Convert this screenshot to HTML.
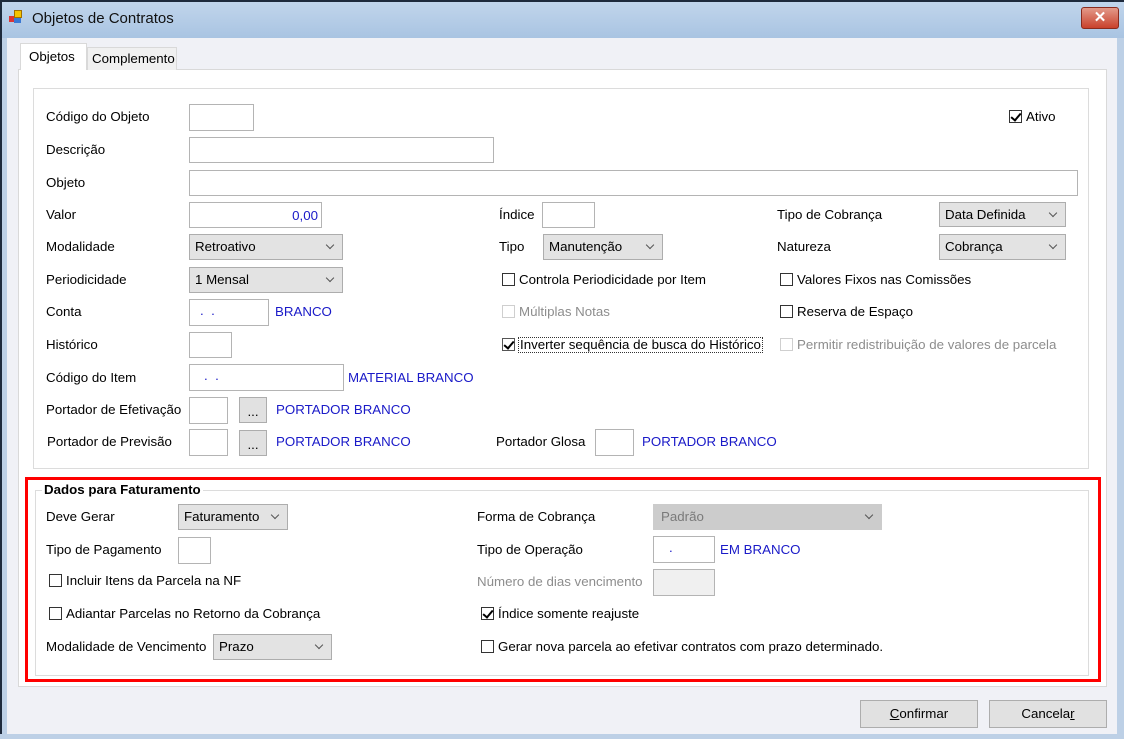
<!DOCTYPE html>
<html><head><meta charset="utf-8"><style>
*{margin:0;padding:0;box-sizing:border-box}
body{width:1124px;height:739px;overflow:hidden;background:#f0f1f6;font-family:"Liberation Sans",sans-serif;font-size:13.3px;color:#000;position:relative}
.a{position:absolute;white-space:nowrap}
.lbl{position:absolute;white-space:nowrap;line-height:14px}
.in{position:absolute;background:#fff;border:1px solid #b4b4b4}
.sel{position:absolute;background:#e3e3e3;border:1px solid #adadad;padding-left:5px;padding-top:5px;line-height:14px}
.sel:after{content:"";position:absolute;right:9px;top:7px;width:5px;height:5px;border-right:1px solid #555;border-bottom:1px solid #555;transform:rotate(45deg)}
.cb{position:absolute;width:13px;height:13px;border:1px solid #333;background:#fff}
.cb.dis{border-color:#cfcfcf}
.chk:after{content:"";position:absolute;left:3px;top:0px;width:4px;height:8px;border-right:2px solid #000;border-bottom:2px solid #000;transform:rotate(40deg)}
.blue{color:#1a1ac8}
.gray{color:#8d8d8d}
.btn{position:absolute;background:#e1e1e1;border:1px solid #adadad;text-align:center}
</style></head><body>
<div class="a" style="left:0;top:0;width:1124px;height:38px;background:linear-gradient(#c2d6ec,#a9c4e2)"></div>
<div class="a" style="left:0;top:0;width:2px;height:739px;background:#1e2a3c"></div>
<div class="a" style="left:2px;top:38px;width:5px;height:701px;background:#bdd0e6"></div>
<div class="a" style="left:1117px;top:38px;width:7px;height:701px;background:#bdd0e6"></div>
<div class="a" style="left:0;top:0;width:1124px;height:2px;background:#1e2a3c"></div>
<div class="a" style="left:0;top:734px;width:1124px;height:5px;background:#bdd0e6"></div>
<div class="a" style="left:7px;top:38px;width:1110px;height:696px;background:#f0f1f6"></div>
<div class="a" style="left:9px;top:16px;width:6px;height:6px;background:#d33"></div>
<div class="a" style="left:14px;top:10px;width:8px;height:8px;background:#f5c400;border:1px solid #a07000"></div>
<div class="a" style="left:14px;top:18px;width:7px;height:5px;background:#3a78d4"></div>
<div class="a" style="left:32px;top:10px;font-size:15px;color:#111">Objetos de Contratos</div>
<div class="a" style="left:1081px;top:7px;width:38px;height:22px;background:linear-gradient(#e39a8a,#c9412c);border:1px solid #8a2b1e;border-radius:3px;color:#fff;font-weight:bold;text-align:center;font-size:15px;line-height:20px">✕</div>

<div class="a" style="left:18px;top:69px;width:1089px;height:618px;background:#fff;border:1px solid #d9d9d9"></div>
<div class="a" style="left:87px;top:47px;width:90px;height:23px;background:#f0f0f0;border:1px solid #d9d9d9;border-bottom:none;padding:3px 0 0 4px">Complemento</div>
<div class="a" style="left:20px;top:43px;width:67px;height:27px;background:#fff;border:1px solid #d9d9d9;border-bottom:none;padding:5px 0 0 8px">Objetos</div>

<div class="a" style="left:33px;top:88px;width:1056px;height:381px;border:1px solid #dcdcdc"></div>

<div class="lbl" style="left:46px;top:110px">Código do Objeto</div><div class="in" style="left:189px;top:104px;width:65px;height:27px"></div>
<div class="cb chk" style="left:1009px;top:110px"></div><div class="lbl" style="left:1026px;top:110px">Ativo</div>
<div class="lbl" style="left:46px;top:143px">Descrição</div><div class="in" style="left:189px;top:137px;width:305px;height:26px"></div>
<div class="lbl" style="left:46px;top:176px">Objeto</div><div class="in" style="left:189px;top:170px;width:889px;height:26px"></div>
<div class="lbl" style="left:46px;top:208px">Valor</div><div class="in blue" style="left:189px;top:202px;width:133px;height:26px;text-align:right;padding:5px 3px 0 0">0,00</div>
<div class="lbl" style="left:499px;top:208px">Índice</div><div class="in" style="left:542px;top:202px;width:53px;height:26px"></div>
<div class="lbl" style="left:777px;top:208px">Tipo de Cobrança</div><div class="sel" style="left:939px;top:202px;width:127px;height:25px">Data Definida</div>
<div class="lbl" style="left:46px;top:240px">Modalidade</div><div class="sel" style="left:189px;top:234px;width:154px;height:26px">Retroativo</div>
<div class="lbl" style="left:499px;top:240px">Tipo</div><div class="sel" style="left:543px;top:234px;width:120px;height:26px">Manutenção</div>
<div class="lbl" style="left:777px;top:240px">Natureza</div><div class="sel" style="left:939px;top:234px;width:127px;height:26px">Cobrança</div>
<div class="lbl" style="left:46px;top:273px">Periodicidade</div><div class="sel" style="left:189px;top:267px;width:154px;height:26px">1 Mensal</div>
<div class="cb" style="left:502px;top:273px"></div><div class="lbl" style="left:519px;top:273px">Controla Periodicidade por Item</div>
<div class="cb" style="left:780px;top:273px"></div><div class="lbl" style="left:797px;top:273px">Valores Fixos nas Comissões</div>
<div class="lbl" style="left:46px;top:305px">Conta</div><div class="in blue" style="left:189px;top:299px;width:80px;height:27px;padding:3px 0 0 10px">.&nbsp;&nbsp;.</div><div class="lbl blue" style="left:275px;top:305px">BRANCO</div>
<div class="cb dis" style="left:502px;top:305px"></div><div class="lbl gray" style="left:519px;top:305px">Múltiplas Notas</div>
<div class="cb" style="left:780px;top:305px"></div><div class="lbl" style="left:797px;top:305px">Reserva de Espaço</div>
<div class="lbl" style="left:46px;top:338px">Histórico</div><div class="in" style="left:189px;top:332px;width:43px;height:26px"></div>
<div class="cb chk" style="left:502px;top:338px;border-color:#555"></div><div class="lbl" style="left:518px;top:337px;border:1px dotted #333;padding:0 1px">Inverter sequência de busca do Histórico</div>
<div class="cb dis" style="left:780px;top:338px"></div><div class="lbl gray" style="left:797px;top:338px">Permitir redistribuição de valores de parcela</div>
<div class="lbl" style="left:46px;top:371px">Código do Item</div><div class="in blue" style="left:189px;top:364px;width:155px;height:27px;padding:3px 0 0 14px">.&nbsp;&nbsp;.</div><div class="lbl blue" style="left:348px;top:371px">MATERIAL BRANCO</div>
<div class="lbl" style="left:46px;top:403px">Portador de Efetivação</div><div class="in" style="left:189px;top:397px;width:39px;height:27px"></div><div class="btn" style="left:239px;top:397px;width:28px;height:26px;line-height:28px">...</div><div class="lbl blue" style="left:276px;top:403px">PORTADOR BRANCO</div>
<div class="lbl" style="left:47px;top:435px">Portador de Previsão</div><div class="in" style="left:189px;top:429px;width:39px;height:27px"></div><div class="btn" style="left:239px;top:430px;width:28px;height:26px;line-height:28px">...</div><div class="lbl blue" style="left:276px;top:435px">PORTADOR BRANCO</div>
<div class="lbl" style="left:496px;top:435px">Portador Glosa</div><div class="in" style="left:595px;top:429px;width:39px;height:27px"></div><div class="lbl blue" style="left:642px;top:435px">PORTADOR BRANCO</div>

<div class="a" style="left:25px;top:477px;width:1076px;height:205px;border:3px solid #f00"></div>
<div class="a" style="left:35px;top:490px;width:1054px;height:186px;border:1px solid #dcdcdc"></div>
<div class="lbl" style="left:42px;top:483px;background:#fff;padding:0 2px;font-weight:bold">Dados para Faturamento</div>
<div class="lbl" style="left:46px;top:510px">Deve Gerar</div><div class="sel" style="left:178px;top:504px;width:110px;height:26px">Faturamento</div>
<div class="lbl" style="left:46px;top:543px">Tipo de Pagamento</div><div class="in" style="left:178px;top:537px;width:33px;height:27px"></div>
<div class="cb" style="left:49px;top:574px"></div><div class="lbl" style="left:66px;top:574px">Incluir Itens da Parcela na NF</div>
<div class="cb" style="left:49px;top:607px"></div><div class="lbl" style="left:66px;top:607px">Adiantar Parcelas no Retorno da Cobrança</div>
<div class="lbl" style="left:46px;top:640px">Modalidade de Vencimento</div><div class="sel" style="left:213px;top:634px;width:119px;height:26px">Prazo</div>
<div class="lbl" style="left:477px;top:510px">Forma de Cobrança</div><div class="sel" style="left:653px;top:504px;width:229px;height:26px;background:#ccc;border-color:#ccc;color:#7a7a7a;padding-left:7px">Padrão</div>
<div class="lbl" style="left:477px;top:543px">Tipo de Operação</div><div class="in blue" style="left:653px;top:536px;width:62px;height:27px;padding:3px 0 0 15px">.</div><div class="lbl blue" style="left:720px;top:543px">EM BRANCO</div>
<div class="lbl gray" style="left:477px;top:575px">Número de dias vencimento</div><div class="in" style="left:653px;top:569px;width:62px;height:27px;background:#f0f0f0"></div>
<div class="cb chk" style="left:481px;top:607px"></div><div class="lbl" style="left:498px;top:607px">Índice somente reajuste</div>
<div class="cb" style="left:481px;top:640px"></div><div class="lbl" style="left:498px;top:640px">Gerar nova parcela ao efetivar contratos com prazo determinado.</div>

<div class="btn" style="left:860px;top:700px;width:118px;height:28px;line-height:26px"><u>C</u>onfirmar</div>
<div class="btn" style="left:989px;top:700px;width:118px;height:28px;line-height:26px">Cancela<u>r</u></div>
</body></html>
